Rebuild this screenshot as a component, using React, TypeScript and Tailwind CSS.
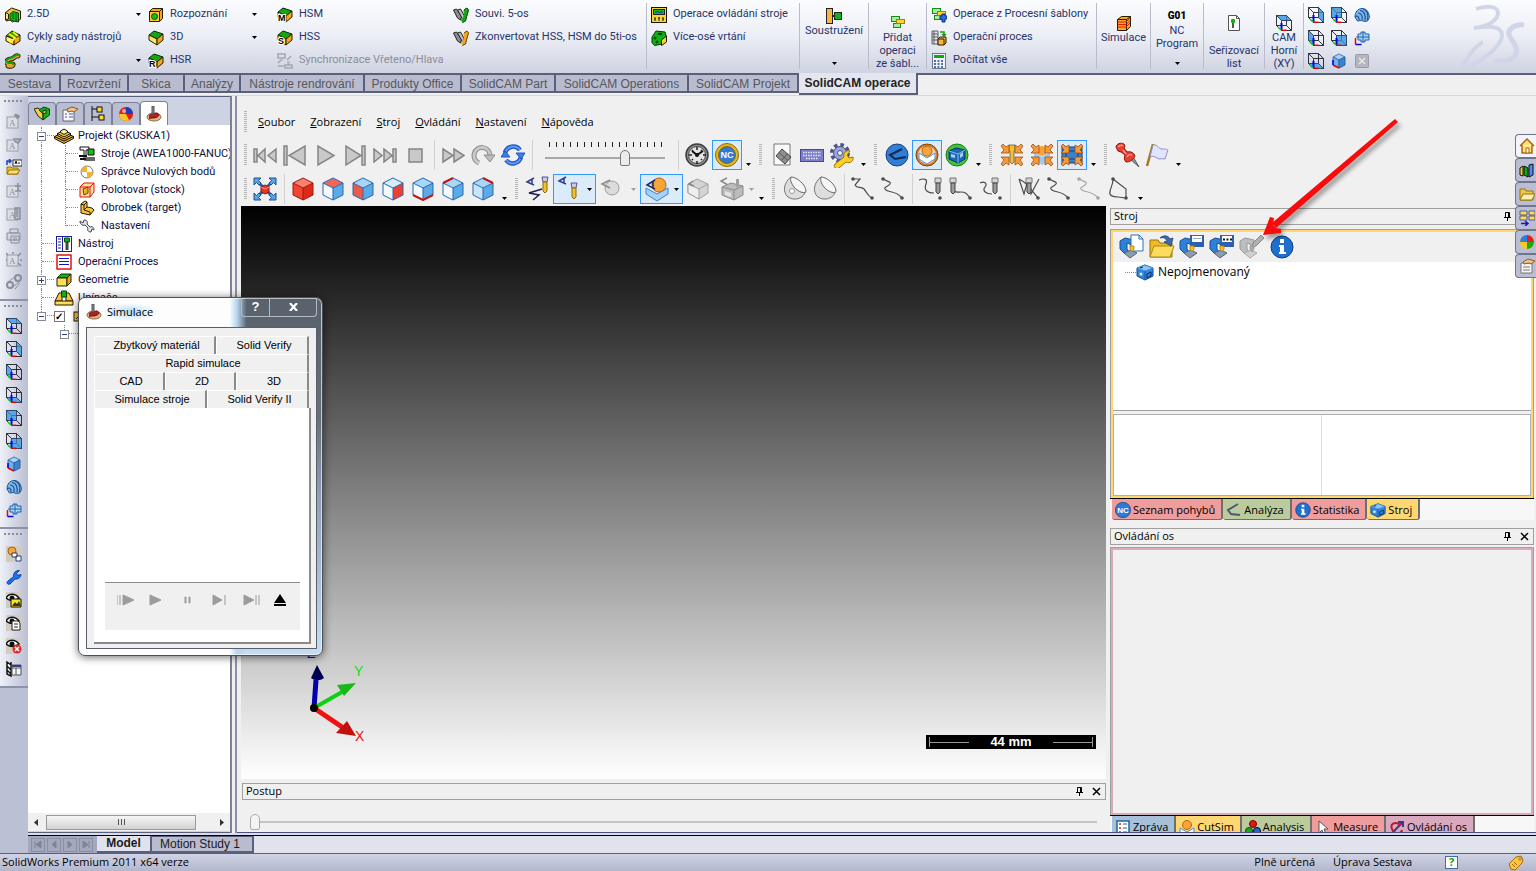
import { useState, type ReactNode } from "react";

type IconProps = { size?: number; box?: number; children: ReactNode };

const Svg = ({ size = 16, box = 16, children }: IconProps) => (
  <svg
    xmlns="http://www.w3.org/2000/svg"
    className="shrink-0"
    width={size}
    height={size}
    viewBox={`0 0 ${box} ${box}`}
    fill="none"
  >
    {children}
  </svg>
);

/* ---------- shared drawings ---------- */

const FACES = {
  top: "0.5,0.5 10.5,0.5 15.5,5.5 5.5,5.5",
  bottom: "0.5,10.5 10.5,10.5 15.5,15.5 5.5,15.5",
  left: "0.5,0.5 5.5,5.5 5.5,15.5 0.5,10.5",
  right: "10.5,0.5 15.5,5.5 15.5,15.5 10.5,10.5",
  back: "0.5,0.5 10.5,0.5 10.5,10.5 0.5,10.5",
  front: "5.5,5.5 15.5,5.5 15.5,15.5 5.5,15.5",
};

const WireCube = ({ face }: { face: keyof typeof FACES }) => (
  <Svg>
    <polygon points={FACES[face]} fill="#5aa7e6" stroke="#1c62ad" />
    <path
      d="M.5.5h10v10H.5zM5.500 5.500h10v10h-10zM.5.5l5 5M10.500.5l5 5M10.500 10.500l5 5M.5 10.500l5 5"
      stroke="#1d1d28"
      strokeWidth=".9"
    />
    <polygon points={FACES[face]} fill="#5aa7e6" fillOpacity=".6" />
    <path d="M5.500 8v7" stroke="#0000f0" strokeWidth="2" />
    <path d="M2 12l3 3" stroke="#00d000" strokeWidth="1.500" />
    <path d="M5.500 15.300h5" stroke="#f00000" strokeWidth="1.500" />
  </Svg>
);

const IsoSolid = () => (
  <Svg>
    <polygon points="2,4 8,1 14,4 8,7" fill="#a9d3f5" stroke="#3f78b5" />
    <polygon points="2,4 8,7 8,15 2,12" fill="#6fb1e8" stroke="#3f78b5" />
    <polygon points="14,4 8,7 8,15 14,12" fill="#3a83cf" stroke="#2a62a5" />
    <path d="M2 12l6 3" stroke="#f00000" strokeWidth="1.500" />
    <path d="M2 7v5" stroke="#0000f0" strokeWidth="1.500" />
  </Svg>
);

const Spiral = () => (
  <Svg>
    <path
      d="M1 10C1 5 4 1.500 8 1.500c5 0 7 4 7.500 9l-2 3.500-3 .5-3-1-4 .5z"
      fill="#7db8ea"
      stroke="#1c5296"
    />
    <path
      d="M4 6c3 0 5 3 4 7M6 3.500c4 0 6 5 5 10M9 2c4 1 6 6 4.500 11M1.500 10c1-2 4-1 3.500 3"
      stroke="#1c5296"
      strokeWidth="1.200"
    />
  </Svg>
);

const CrossBlock = () => (
  <Svg>
    <path d="M4 4h3V2h4v2h4v6h-4v2H7v-2H4z" fill="#a8d2f5" stroke="#1c62ad" />
    <path d="M2 7h13M9 2v10" stroke="#1c62ad" />
    <path d="M1.500 8v6.500" stroke="#f00000" strokeWidth="1.500" />
    <path d="M1.500 14.500h6" stroke="#0000f0" strokeWidth="1.500" />
  </Svg>
);

const Block = ({ top = "#12a812", side = "#f4a51c", letter = "" }) => (
  <Svg>
    <polygon points="1,5 6,1 15,4 9,9" fill={top} stroke="#0a2d0a" />
    <polygon points="1,5 9,9 9,15 1,10" fill="#fbe76a" stroke="#2b1c00" />
    <polygon points="15,4 9,9 9,15 15,10" fill={side} stroke="#2b1c00" />
    {letter && (
      <text
        x="1"
        y="14"
        fontSize="9"
        fontWeight="700"
        fontFamily="Liberation Sans"
        fill="#000"
        stroke="#fff"
        strokeWidth="2"
        paintOrder="stroke"
      >
        {letter}
      </text>
    )}
  </Svg>
);

const Pocket = () => (
  <Svg>
    <path d="M.5 5.500l6-4.500 9 3v8l-3 3-3-1-2 1-2.500-2-3.500 1z" fill="#f4c430" stroke="#2b1c00" />
    <path d="M5 7l3-2.500 5.500 1.500v9l-2-1.500-2 1L5 12.500z" fill="#12b012" stroke="#0a4a0a" />
    <path d="M8 6v6M11 6v7" stroke="#0a6a0a" />
    <path d="M.5 5.500V13l3-1V7z" fill="#fbe76a" stroke="#2b1c00" />
  </Svg>
);

const ToolSet = () => (
  <Svg>
    <polygon points="1,6 7,1 15,5 9,9" fill="#16b016" stroke="#2b1c00" />
    <polygon points="1,6 9,9 9,15 1,11" fill="#fff17a" stroke="#2b1c00" />
    <polygon points="15,5 9,9 9,15 15,11" fill="#f4a51c" stroke="#2b1c00" />
    <path d="M4 4l6 4-5 5M8 2l5 4" stroke="#ffee00" strokeWidth="2" />
  </Svg>
);

const Snake = () => (
  <Svg>
    <path
      d="M13 3c-3-1-4 3-7 3S1 8 2 10s7 0 6 2-5 1-5 1"
      stroke="#2b1c00"
      strokeWidth="5"
      strokeLinecap="round"
    />
    <path
      d="M13 3c-3-1-4 3-7 3S1 8 2 10s7 0 6 2-5 1-5 1"
      stroke="#e8a52a"
      strokeWidth="3"
      strokeLinecap="round"
    />
    <path
      d="M13 2c-3-1-4 3-7 3S1 7 2 9s7 0 6 2"
      stroke="#16a016"
      strokeWidth="2"
      strokeLinecap="round"
    />
  </Svg>
);

const Recognition = () => (
  <Svg>
    <polygon points="1.5,4.5 4.5,1.5 14.5,1.5 14.5,11.5 11.5,14.5 1.5,14.5" fill="#f4a51c" stroke="#2b1c00" />
    <path d="M1.500 4.500h10v10M11.500 4.500l3-3" stroke="#2b1c00" />
    <rect x="2" y="5" width="9" height="9" fill="#fbc63a" />
    <circle cx="6.500" cy="9.500" r="3" fill="#12c012" stroke="#064d06" />
  </Svg>
);

const SyncIcon = () => (
  <Svg>
    <path d="M1 1h7v4H1zM8 12h7v3H8zM4.500 5v3M11.500 8v4M1 10l3-3M10 7l4-4M1 13h6" stroke="#a5a7ae" strokeWidth="1.500" />
    <circle cx="4.500" cy="6.500" r="1.500" fill="#b9bbc2" />
    <circle cx="11.500" cy="9.500" r="1.500" fill="#b9bbc2" />
  </Svg>
);

const FiveAxis = ({ tip }: { tip: string }) => (
  <Svg>
    <path d="M.5 3l3-1 5 7-1 4-3-2z" fill="#8d8f92" stroke="#222" />
    <path d="M4.500 3l3-1 4 7-2 3z" fill="#b8babd" stroke="#222" />
    <path d="M11 3l3-2 1.500 2-2 7-1 4-3 1.500-1-3 3-3z" fill={tip} stroke={tip} />
    <path d="M11 3l3-2 1.500 2-2 7-1 4-3 1.500" stroke="#222" strokeWidth=".7" />
  </Svg>
);

const MachineControl = () => (
  <Svg>
    <rect x=".5" y=".5" width="15" height="15" fill="#f8d53c" stroke="#1c1400" />
    <rect x="2.500" y="2.500" width="11" height="5" fill="#12c012" stroke="#222" />
    <path d="M4 5h2l1-1 1 2 1-1h3" stroke="#0020c0" />
    <path d="M4 10v4M8 10v4M12 10v4M3 12h2M7 11h2M11 12h2" stroke="#222" />
  </Svg>
);

const MultiDrill = () => (
  <Svg>
    <path d="M1 7l4-6 9 1 1.500 5-4 7-8 1.500-2.500-3z" fill="#12b012" stroke="#06360a" />
    <path d="M15.500 6v6l-5 3.500V10z" fill="#f4d42a" stroke="#2b1c00" />
    <circle cx="4" cy="8" r="1.500" fill="#064d06" />
    <circle cx="6" cy="12" r="1.500" fill="#064d06" />
    <ellipse cx="9" cy="4" rx="2.500" ry="1.200" fill="#064d06" />
  </Svg>
);

const Turning = () => (
  <Svg>
    <rect x=".5" y=".5" width="6" height="15" fill="#f6b73c" stroke="#222" />
    <path d="M6.500 8h3" stroke="#222" strokeWidth="2" />
    <rect x="8.500" y="4.500" width="7" height="7" fill="#12b012" stroke="#222" />
  </Svg>
);

const Template = ({ plus = false }) => (
  <Svg>
    <rect x="1.500" y="1.500" width="8" height="5" fill="#a6eda0" stroke="#12901a" />
    <rect x="3.500" y="8.500" width="7" height="4" fill="#a6eda0" stroke="#12901a" />
    <rect x="6.500" y="4.500" width="8" height="4" fill="#fcd535" stroke="#b07a00" />
    {plus && (
      <path d="M9 9h2V7h3v2h2v3h-2v3h-3v-3H9z" fill="#2c6fe0" stroke="#0a2f80" />
    )}
  </Svg>
);

const ProcessIcon = () => (
  <Svg>
    <path d="M1 1h6v13H1zM1 4h6M1 7h6M1 10h6M3 1v13" fill="#e4e6ea" stroke="#5c5f66" />
    <path d="M9 2h4v3M11 4l2 2 2-2" stroke="#16a016" strokeWidth="1.500" />
    <path d="M7 9l2-2h6v6l-2 2H7z" fill="#f6b73c" stroke="#2b1c00" />
    <path d="M7 9h6v6" stroke="#2b1c00" />
  </Svg>
);

const Calculator = () => (
  <Svg>
    <rect x="1.500" y=".5" width="13" height="15" fill="#eef2fb" stroke="#6b7796" />
    <rect x="3" y="2" width="10" height="3" fill="#12a812" />
    <path d="M3 8h10M3 11h10M3 14h10" stroke="#27447f" strokeWidth="1.500" strokeDasharray="2 1.500" />
  </Svg>
);

const SimStack = () => (
  <Svg>
    <path d="M1.500 4.500l4-3h9v10l-4 4h-9z" fill="#f9a62b" stroke="#2b1c00" />
    <path d="M1.500 4.500h9v11M10.500 4.500l4-3" stroke="#2b1c00" />
    <path d="M2 7h8l4-4M2 9.500h8l4-4M2 12h8l4-4" stroke="#e02000" />
  </Svg>
);

const SetupSheet = () => (
  <Svg>
    <path d="M2.500.5h8l3 3v12h-11z" fill="#fdfdfd" stroke="#555" />
    <path d="M10.500.5v3h3" stroke="#555" />
    <rect x="5" y="4" width="4" height="4" rx="1" fill="#12b012" />
    <path d="M7 8v5" stroke="#555" strokeWidth="2" />
  </Svg>
);

const Disabled = () => (
  <Svg>
    <rect x="1.500" y="1.500" width="13" height="13" rx="1" fill="#b4b6bd" stroke="#9a9ca4" />
    <path d="M5 5l6 6M11 5l-6 6" stroke="#e7e8ec" strokeWidth="1.500" />
  </Svg>
);

/* Iso cube of the view toolbar, 24px */
const ViewCube = ({ top = "#d6ecfb", left = "#a9d6f7", right = "#5cabe9", edge = "" }) => (
  <Svg size={24} box={24}>
    <polygon points="2,6 12,1 22,6 12,11" fill={top} />
    <polygon points="2,6 12,11 12,23 2,18" fill={left} />
    <polygon points="22,6 12,11 12,23 22,18" fill={right} />
    <path
      d="M2 6l10-5 10 5v12l-10 5-10-5zM2 6l10 5 10-5M12 11v12"
      stroke={left === "#f2452f" && right === "#dd2a18" ? "#a01810" : "#2468b0"}
    />
    {edge && <path d={edge} stroke="#c01818" strokeWidth="2" />}
  </Svg>
);

const P = {
  first: "M1 6h3v13H1zM12 6v13L5 12.500zM23 6v13l-8-6.500z",
  prev: "M1 3h3v19H1zM22 3v19L6 12.500z",
  play: "M5 3v19l16-9.500z",
  next: "M3 3v19l15-9.500zM19 3h3v19h-3z",
  last: "M1 6v13l8-6.500zM11 6v13l8-6.500zM20 6h3v13h-3z",
  stop: "M6 6h13v13H6z",
  ff: "M2 6v13l10-6.500zM13 6v13l10-6.500z",
};

const Media = ({ d }: { d: string }) => (
  <Svg size={25} box={25}>
    <path d={d} fill="#c9c9c9" stroke="#858585" strokeWidth="1.500" />
  </Svg>
);

const LoopGray = () => (
  <Svg size={24} box={24}>
    <path d="M8 20a8 8 0 1 1 11-8" stroke="#8d8d8d" strokeWidth="5" />
    <path d="M8 20a8 8 0 1 1 11-8" stroke="#c9c9c9" strokeWidth="3" />
    <path d="M13 12h11l-5 7z" fill="#bdbdbd" stroke="#8d8d8d" />
  </Svg>
);

const LoopBlue = () => (
  <Svg size={24} box={24}>
    <path d="M4 10a8.500 8.500 0 0 1 15-3M20 14a8.500 8.500 0 0 1-15 3" stroke="#1c55c8" strokeWidth="4.500" />
    <path d="M4 10a8.500 8.500 0 0 1 15-3M20 14a8.500 8.500 0 0 1-15 3" stroke="#5c9af4" strokeWidth="2" />
    <path d="M0 14h9l-5-6zM24 10h-9l5 6z" fill="#3f7eea" stroke="#1c55c8" />
  </Svg>
);

const Clock = () => (
  <Svg size={24} box={24}>
    <circle cx="12" cy="12" r="11" fill="#8f8f8f" stroke="#3e3e3e" strokeWidth="1.500" />
    <circle cx="12" cy="12" r="8.500" fill="#e4e4e4" stroke="#4a4a4a" />
    <path d="M12 4v3M12 18v3M4 12h3M18 12h3M7 7l1 1M17 7l-1 1M7 17l1-1M17 17l-1-1" stroke="#222" strokeWidth="1.500" />
    <path d="M7 8l5 4 6-4" stroke="#111" strokeWidth="2" />
    <circle cx="12" cy="12" r="2" fill="#111" />
  </Svg>
);

const NcBadge = ({ size = 24, gold = true }) => (
  <Svg size={size} box={24}>
    <circle cx="12" cy="12" r="11.500" fill={gold ? "#e9b91c" : "#2c7bd8"} stroke={gold ? "#8a6a08" : "#123f80"} />
    <circle cx="12" cy="12" r="8.500" fill="#2c7bd8" stroke={gold ? "#8a6a08" : "#2c7bd8"} />
    <text
      x="12"
      y={gold ? 15 : 16}
      fontSize={gold ? 9 : 12}
      fontWeight="700"
      fontFamily="Liberation Sans"
      textAnchor="middle"
      fill="#fff"
    >
      NC
    </text>
  </Svg>
);

const PlaneSheet = () => (
  <Svg size={24} box={24}>
    <path d="M4 1h16v21H4z" fill="#fafafa" stroke="#777" />
    <path d="M6 13l6-7 9 8-6 7z" fill="#8e8e8e" stroke="#444" />
    <path d="M9 9.500l9 8M12 17l6-7" stroke="#5b5b5b" />
  </Svg>
);

const Keyboard = () => (
  <Svg size={24} box={24}>
    <rect x=".5" y="6.500" width="23" height="12" fill="#7d7fc6" stroke="#474a92" />
    <path d="M3 9.500h18M3 12.500h18M6 15.500h12" stroke="#e4e4fb" strokeWidth="1.500" strokeDasharray="1.500 1" />
  </Svg>
);

const GearWrench = () => (
  <Svg size={26} box={26}>
    <circle cx="11" cy="11" r="8" stroke="#4a5488" strokeWidth="4" strokeDasharray="3.400 2.900" />
    <circle cx="11" cy="11" r="6.500" fill="#9aa5d6" stroke="#4a5488" />
    <circle cx="11" cy="11" r="2.500" fill="#f0f0f0" stroke="#4a5488" />
    <path
      d="M6 22l9-7c-1-5 3-7 6-6l-3 4 2 3 4-1c1 4-3 7-7 5l-7 6c-3 2-6-1-4-4z"
      fill="#fbcf2a"
      stroke="#9c7400"
    />
  </Svg>
);

const BlueHook = () => (
  <Svg size={24} box={24}>
    <circle cx="12" cy="12" r="11" fill="#2f7fd6" stroke="#17427e" />
    <path d="M17 6L5 12l5 4 11-2" stroke="#12284e" strokeWidth="2" />
  </Svg>
);

const CutBadge = () => (
  <Svg size={24} box={24}>
    <circle cx="12" cy="12" r="11" fill="#dd7d1c" stroke="#7c430a" />
    <circle cx="12" cy="12" r="9" fill="#e9dccb" />
    <path d="M4 10l8 5 8-5v6l-8 5-8-5z" fill="#fff" stroke="#4a90d8" />
    <circle cx="12" cy="8" r="5" fill="#f7a53a" stroke="#b8660c" />
  </Svg>
);

const GreenBadge = () => (
  <Svg size={24} box={24}>
    <circle cx="12" cy="12" r="11" fill="#3cc83a" stroke="#1b7a1b" />
    <path d="M4 8l7-3 9 2v9l-7 4-9-4z" fill="#1f66b8" stroke="#0c2f60" />
    <path d="M4 8l9 3 7-4M13 11v9" stroke="#7cbcf2" />
    <path d="M6 11l4 1v3l-4-1zM15 11l3-2v4l-3 2z" fill="#9fd0f7" />
  </Svg>
);

const FocusIn = ({ core }: { core: "tool" | "part" | "machine" }) => (
  <Svg size={24} box={24}>
    {core === "machine" && <path d="M2 4h20v16H2zM6 8h12v8H6z" fill="#3584d2" stroke="#123f78" />}
    {core === "part" && (
      <g>
        <path d="M4 9l8 5 8-5v8l-8 5-8-5z" fill="#9acbf5" />
        <circle cx="12" cy="8" r="5" fill="#f7a53a" />
      </g>
    )}
    {core === "tool" && (
      <path d="M9 2h6v6h-1v11l-2 2-2-2V8H9z" fill="#f0c030" stroke="#777" />
    )}
    <path
      d="M1 3l2-2 3 3 3-2v8H1l3-3zM23 3l-2-2-3 3-3-2v8h8l-3-3zM1 21l2 2 3-3 3 2v-8H1l3 3zM23 21l-2 2-3-3-3 2v-8h8l-3 3z"
      fill="#f79a3c"
      stroke="#a04f0a"
      strokeWidth=".8"
    />
  </Svg>
);

const Pin = () => (
  <Svg size={26} box={26}>
    <path d="M15 16l10 9-7-12z" fill="#999" stroke="#555" />
    <path
      d="M2 5c0-3 5-5 8-3l1 2-1 2 3 4c4-1 7 1 8 4-2 4-5 6-9 6-2-2-2-5-1-7L7 10l-3-1z"
      fill="#e8402e"
      stroke="#8c140c"
    />
    <path d="M4 5c2-2 4-2 5-1M9 8l3 4M13 15c1-2 3-3 5-2" stroke="#ff9a8a" strokeWidth="1.500" />
  </Svg>
);

const Flag = () => (
  <Svg size={26} box={26}>
    <path d="M9 2L3 24" stroke="#a87a1c" strokeWidth="2.500" />
    <path d="M9 3c5-1 5 4 9 4s4 0 6 1l-3 9c-4-1-5 1-8-1s-4-2-7-1z" fill="#e2e3fc" stroke="#8f91c8" />
  </Svg>
);

const FitView = () => (
  <Svg size={24} box={24}>
    <path d="M6 6l12 12M18 6L6 18" stroke="#1f5fb4" strokeWidth="3" />
    <path
      d="M1 1h7L5.500 3.500 8 6 6 8 3.500 5.500 1 8zM23 1h-7l2.500 2.500L16 6l2 2 2.500-2.500L23 8zM1 23h7l-2.500-2.500L8 18l-2-2-2.500 2.500L1 16zM23 23h-7l2.500-2.500L16 18l2-2 2.500 2.500L23 16z"
      fill="#56a4ea"
      stroke="#1c4f94"
    />
    <path d="M8 10l4-2 4 2v5l-4 2-4-2z" fill="#e63522" stroke="#8c140c" />
    <path d="M8 10l4 2 4-2" stroke="#ff9a8a" />
  </Svg>
);

const EyeTool = ({ path = false }) => (
  <Svg size={26} box={26}>
    <path d="M9 2L2 6l7 3M7 3v5" stroke="#2c3f8c" strokeWidth="1.500" />
    <path d="M17 1h6l-1 5h-4z" fill="#c9cbe8" stroke="#54568c" />
    <path d="M18 6h4v9l-2 2-2-2z" fill="#f2c22c" stroke="#8a6a08" />
    {path && <path d="M17 13L4 17l10 2-6 5" stroke="#1c1c54" strokeWidth="1.500" />}
  </Svg>
);

const EyeToolLow = () => (
  <Svg size={26} box={26}>
    <path d="M9 1L2 5l7 3M7 2v5" stroke="#2c3f8c" strokeWidth="1.500" />
    <path d="M14 7h6l-1 5h-4z" fill="#c9cbe8" stroke="#54568c" />
    <path d="M15 12h4v9l-2 2-2-2z" fill="#f2c22c" stroke="#8a6a08" />
  </Svg>
);

const EyeGray = () => (
  <Svg size={24} box={24}>
    <circle cx="13" cy="11" r="7" fill="#dcdcdc" stroke="#9c9c9c" />
    <path d="M11 3L3 7l8 4" stroke="#8a8a8a" strokeWidth="1.500" />
  </Svg>
);

const EyePart = () => (
  <Svg size={26} box={26}>
    <path d="M2 12l11 6 11-6v6l-11 7-11-7z" fill="#a6d2f7" stroke="#3f84cc" />
    <circle cx="15" cy="9" r="7" fill="#f7a53a" stroke="#b8660c" />
    <path d="M11 4L3 9l8 4M9 5v7" stroke="#1c2c64" strokeWidth="1.500" />
  </Svg>
);

const BoxGray = () => (
  <Svg size={24} box={24}>
    <path d="M2 7l9-5 11 5v9l-9 6-11-6z" fill="#d4d4d4" stroke="#a0a0a0" />
    <path d="M2 7l11 5v10L2 16z" fill="#efefef" stroke="#a0a0a0" />
    <path d="M13 12l9-5" stroke="#a0a0a0" />
    <path d="M7 4L3 7l5 2" stroke="#888" strokeWidth="1.500" />
  </Svg>
);

const MachineGray = () => (
  <Svg size={26} box={26}>
    <path d="M8 2L2 5l7 4" stroke="#8a8a8a" strokeWidth="1.500" />
    <path d="M3 11l9-4 12 3v9l-9 5-12-5z" fill="#bcbcbc" stroke="#8a8a8a" />
    <path d="M3 11l12 3 9-4M15 14v10" stroke="#8a8a8a" />
    <path d="M6 15l6 2v4l-6-2z" fill="#e4e4e4" />
    <path d="M17 3h3v7l-2 2-1-2z" fill="#a0a0a0" />
  </Svg>
);

const Bulb = ({ dot = false }) => (
  <Svg size={26} box={26}>
    <path d="M9 1c-7 5-9 15-3 20 6 4 14 2 17-4 1-2 0-5-3-6S12 7 9 1z" fill="#dedede" stroke="#777" />
    <path d="M9 1c6 0 15 8 15 14-1 4-9 0-12-4S8 4 9 1z" fill="#f6f6f6" stroke="#666" />
    {dot && <circle cx="10" cy="15" r="2.500" fill="#fff" stroke="#999" />}
  </Svg>
);

const PATHS = {
  a: "M2 3h8l-5 6c2 4 6 1 9 4s3 7 8 9",
  b: "M3 2c2 4 9 3 7 6s-8 3-4 6 9 0 16 8",
  c: "M1 4c5-2 9-1 7 4s0 9 8 9",
  d: "M4 10c-1 7 4 6 9 6s6 2 9 6",
  e: "M2 7c4-2 8 0 5 4s1 7 7 7",
  f: "M3 3l5 15 4-14 3 14 8-15M3 3c8 4 10 8 19 19",
  g: "M7 3l13 10v9l-8-1c-6 0-9-2-8-5 0-4 3-6 3-13z",
};

const PathIcon = ({ d, tool = 0, light = false }: { d: string; tool?: number; light?: boolean }) => (
  <Svg size={26} box={26}>
    <path d={d} stroke={light ? "#a5a5a5" : "#4c4c4c"} strokeWidth="1.200" />
    {tool > 0 && (
      <g transform={`translate(${tool} 0)`}>
        <path d="M0 2h6v5H0z" fill="#d4d4d4" stroke="#777" />
        <path d="M1 7h4v9l-2 2-2-2z" fill="#9c9c9c" stroke="#444" />
      </g>
    )}
    <circle cx={d === PATHS.g ? 20 : 22} cy="22" r="1.800" fill={light ? "#a5a5a5" : "#4c4c4c"} />
    {tool === 0 && (
      <circle cx={d === PATHS.g ? 7 : 3} cy="3" r="1.800" fill={light ? "#a5a5a5" : "#4c4c4c"} />
    )}
  </Svg>
);

const MachineBlue = ({ extra, gray = false }: { extra: ReactNode; gray?: boolean }) => (
  <Svg size={26} box={26}>
    <path
      d="M1 7l5-3 9 2v5h-4v-1l-3-1v6l2 3-4 2-5-5z"
      fill={gray ? "#bdbdbd" : "#2f80d8"}
      stroke={gray ? "#999" : "#1b508e"}
    />
    <path d="M5 19l7-3 6 3-7 5z" fill={gray ? "#cfcfcf" : "#8b9bb0"} stroke={gray ? "#aaa" : "#566579"} />
    {extra}
    <path d="M11 12h4v3l-2 3-2-3z" fill={gray ? "#aaa" : "#f5c02e"} stroke={gray ? "#999" : "#b08010"} strokeWidth=".8" />
  </Svg>
);

const Folder = ({ size = 26 }) => (
  <Svg size={size} box={26}>
    <path d="M1 6h8l2 3h12v14H1z" fill="#eeb92a" stroke="#9c7400" />
    <path d="M5 12h20l-4 11H1z" fill="#fbdc5c" stroke="#b08a10" />
    <path d="M11 4c3-3 8-3 10 1l3-1-2 8-7-4 3-1c-1-3-4-4-7-3z" fill="#3f6ca8" stroke="#1f3f70" strokeWidth=".8" />
  </Svg>
);

const Info = ({ size = 24 }) => (
  <Svg size={size} box={24}>
    <circle cx="12" cy="12" r="11" fill="#1f6fcf" stroke="#123f80" />
    <path d="M10 4h4v4h-4zM9 10h5v7h2v2H9v-2h1v-5H9z" fill="#fff" />
  </Svg>
);

const MachineCube = ({ size = 18 }) => (
  <Svg size={size} box={18}>
    <path d="M1 5l8-3 8 3v8l-8 4-8-4z" fill="#2f86de" stroke="#154a8a" />
    <path d="M1 5l8 3 8-3-8-3z" fill="#8cc6f5" stroke="#3f8fdc" />
    <path d="M9 8v9" stroke="#1b5ca6" />
    <path d="M4 5l3-1M11 11l4-2v4l-4 2z" stroke="#0c2c5a" />
    <circle cx="5" cy="11" r="1.500" fill="#d8ecff" />
  </Svg>
);

const ToolDisc = () => (
  <Svg>
    <ellipse cx="8" cy="11" rx="7" ry="4" fill="#d9b98a" stroke="#8c6a3c" />
    <path d="M3 10c2-3 5-1 7-3 3 0 4 3 1 4-3 2-6 0-8 2" fill="#c01c1c" stroke="#7c0a0a" />
    <path d="M6 0h2v7l-1 2-1-2z" fill="#8e9296" stroke="#4c5056" />
  </Svg>
);

/* ---------- small pieces ---------- */

const Arrow = ({ gray = false }) => (
  <svg className={`shrink-0 ${gray ? "text-gray-400" : "text-black"}`} width="5" height="3" viewBox="0 0 5 3">
    <path d="M0 0h5L2.500 3z" fill="currentColor" />
  </svg>
);

const Grip = ({ first = false }) => (
  <span className={`flex h-[22px] shrink-0 justify-center ${first ? "w-[9px]" : "w-[13px]"}`}>
    <span className="w-[3px] bg-[repeating-linear-gradient(to_bottom,#b5b5b5_0_1px,transparent_1px_2px)]" />
  </span>
);

const Sep = () => (
  <span className="flex w-2 shrink-0 justify-center">
    <span className="h-[30px] w-px bg-[#d0d0d0]" />
  </span>
);

const More = () => (
  <button aria-label="Další" className="flex h-[22px] w-3 shrink-0 items-end justify-center">
    <Arrow />
  </button>
);

type ToolProps = {
  label: string;
  icon: ReactNode;
  active?: boolean;
  arrow?: boolean;
};

const Tool = ({ label, icon, active, arrow }: ToolProps) => (
  <button
    aria-label={label}
    className={`flex h-[30px] shrink-0 items-center justify-center border ${arrow ? "w-[43px] gap-1" : "w-[30px]"} ${
      active ? "border-[#3399ff] bg-[#dcebfa]" : "border-transparent"
    }`}
  >
    {icon}
    {arrow && <Arrow />}
  </button>
);

/* ---------- ribbon ---------- */

type RibbonItem = { label: string; icon: ReactNode; arrow?: boolean; off?: boolean };

const RibbonColumn = ({ items, className }: { items: RibbonItem[]; className: string }) => (
  <div className={`shrink-0 ${className}`}>
    {items.map((item) => (
      <button
        key={item.label}
        disabled={item.off}
        className="flex h-[23px] w-full items-center gap-[6px] whitespace-nowrap text-left text-[#27336b] disabled:text-[#8b8d96]"
      >
        {item.icon}
        {item.label}
        {item.arrow && (
          <span className="ml-auto">
            <Arrow />
          </span>
        )}
      </button>
    ))}
  </div>
);

const Divider = () => <span className="h-[66px] w-px shrink-0 bg-[#b9bdcb]" />;

type BigProps = {
  lines: string[];
  icon: ReactNode;
  className: string;
  high?: boolean;
  low?: boolean;
  arrow?: boolean;
};

const BigButton = ({ lines, icon, className, high, low, arrow }: BigProps) => (
  <button
    className={`flex h-[68px] shrink-0 flex-col items-center whitespace-nowrap leading-[13px] text-[#27336b] ${
      high ? "pt-1" : "pt-[11px]"
    } ${className}`}
  >
    <span className={`flex h-[17px] shrink-0 items-center ${low ? "mb-[13px]" : ""}`}>{icon}</span>
    {lines.map((line) => (
      <span key={line}>{line}</span>
    ))}
    {arrow && (
      <span className="mt-auto pb-[6px]">
        <Arrow />
      </span>
    )}
  </button>
);

const Ribbon = () => (
  <div className="relative flex h-[73px] shrink-0 overflow-hidden bg-linear-to-b from-[#fbfcfe] via-[#eceef5] to-[#cfd3e1] pl-[5px] pt-[3px] font-['Roboto',sans-serif] text-[11px]">
    <RibbonColumn
      className="mr-[7px] w-[136px]"
      items={[
        { label: "2.5D", icon: <Pocket />, arrow: true },
        { label: "Cykly sady nástrojů", icon: <ToolSet /> },
        { label: "iMachining", icon: <Snake />, arrow: true },
      ]}
    />
    <RibbonColumn
      className="mr-5 w-[109px]"
      items={[
        { label: "Rozpoznání", icon: <Recognition />, arrow: true },
        { label: "3D", icon: <Block />, arrow: true },
        { label: "HSR", icon: <Block letter="R" /> },
      ]}
    />
    <RibbonColumn
      className="w-[176px]"
      items={[
        { label: "HSM", icon: <Block letter="M" /> },
        { label: "HSS", icon: <Block letter="S" /> },
        { label: "Synchronizace Vřeteno/Hlava", icon: <SyncIcon />, off: true },
      ]}
    />
    <RibbonColumn
      className="w-[193px]"
      items={[
        { label: "Souvi. 5-os", icon: <FiveAxis tip="#12a812" /> },
        { label: "Zkonvertovat HSS, HSM do 5ti-os", icon: <FiveAxis tip="#f4a51c" /> },
      ]}
    />
    <Divider />
    <RibbonColumn
      className="ml-1 w-[148px]"
      items={[
        { label: "Operace ovládání stroje", icon: <MachineControl /> },
        { label: "Více-osé vrtání", icon: <MultiDrill /> },
      ]}
    />
    <Divider />
    <BigButton high arrow className="w-[68px]" lines={["Soustružení"]} icon={<Turning />} />
    <Divider />
    <BigButton className="w-[57px]" lines={["Přidat", "operaci", "ze šabl..."]} icon={<Template />} />
    <Divider />
    <RibbonColumn
      className="ml-1 w-[165px]"
      items={[
        { label: "Operace z Procesní šablony", icon: <Template plus /> },
        { label: "Operační proces", icon: <ProcessIcon /> },
        { label: "Počítat vše", icon: <Calculator /> },
      ]}
    />
    <Divider />
    <BigButton className="w-[53px]" lines={["Simulace"]} icon={<SimStack />} />
    <Divider />
    <BigButton
      high
      arrow
      className="w-[52px]"
      lines={["NC", "Program"]}
      icon={<span className="text-[10px] font-black text-black">G01</span>}
    />
    <Divider />
    <BigButton low className="w-[60px]" lines={["Seřizovací", "list"]} icon={<SetupSheet />} />
    <Divider />
    <BigButton className="w-[38px]" lines={["CAM", "Horní", "(XY)"]} icon={<WireCube face="top" />} />
    <Divider />
    <div className="grid w-[69px] shrink-0 grid-cols-3 content-start place-items-center">
      {[
        <WireCube face="right" />,
        <WireCube face="back" />,
        <Spiral />,
        <WireCube face="left" />,
        <WireCube face="front" />,
        <CrossBlock />,
        <WireCube face="bottom" />,
        <IsoSolid />,
        <Disabled />,
      ].map((icon, i) => (
        <button key={i} aria-label={`Pohled ${i + 1}`} className="flex h-[23px] items-center">
          {icon}
        </button>
      ))}
    </div>
    <svg className="ml-auto mr-2 shrink-0" width="76" height="70" viewBox="0 0 76 70" fill="none">
      <path
        d="M24 6c10-4 22-3 22 4 0 8-12 14-24 15 12-2 28-3 28 7 0 12-22 28-40 34 4-11 12-22 21-27"
        stroke="#d0d6e8"
        strokeWidth="4"
      />
      <path d="M72 22c-10-1-18 5-14 12 3 6 11 12 4 20-4 4-12 5-19 3" stroke="#d0d6e8" strokeWidth="5" />
    </svg>
  </div>
);

const TABS = [
  { label: "Sestava", width: "w-[61px]" },
  { label: "Rozvržení", width: "w-[68px]" },
  { label: "Skica", width: "w-[56px]" },
  { label: "Analýzy", width: "w-[56px]" },
  { label: "Nástroje rendrování", width: "w-[124px]" },
  { label: "Produkty Office", width: "w-[97px]" },
  { label: "SolidCAM Part", width: "w-[94px]" },
  { label: "SolidCAM Operations", width: "w-[133px]" },
  { label: "SolidCAM Projekt", width: "w-[110px]" },
  { label: "SolidCAM operace", width: "w-[119px]" },
];

const CommandTabs = () => {
  const [active, setActive] = useState("SolidCAM operace");

  return (
    <div className="flex h-[23px] shrink-0 items-start border-b border-[#d8d8d8] bg-[#f0f0f0] font-['Liberation_Sans',sans-serif] text-[12px] shadow-[inset_0_2px_0_#5b607a]">
      {TABS.map(({ label, width }) => (
        <button
          key={label}
          onClick={() => setActive(label)}
          className={`shrink-0 whitespace-nowrap border-r-2 border-[#5b607a] ${width} ${
            active === label
              ? "h-[22px] border-b-2 bg-[#e4e6ef] font-bold text-[#222]"
              : "h-5 border-y-2 bg-[#b9bccf] text-[#55565e]"
          }`}
        >
          {label}
        </button>
      ))}
    </div>
  );
};

/* ---------- left toolbar ---------- */

const FadedNote = ({ d }: { d: string }) => (
  <Svg>
    <rect x="1" y="4" width="11" height="11" fill="#dcdee6" stroke="#9a9da8" />
    <text x="3" y="13" fontSize="9" fontFamily="Liberation Serif" fill="#8b8e99">
      A
    </text>
    <path d={d} stroke="#8b8e99" strokeWidth="1.500" />
  </Svg>
);

const Eye = ({ children }: { children: ReactNode }) => (
  <Svg>
    <rect width="16" height="16" fill="#d2ccc0" />
    <path d="M0 6c3-5 9-5 13 0-4 3-9 3-13 0z" fill="#fff" stroke="#111" strokeWidth="1.500" />
    <circle cx="6" cy="6" r="2.500" fill="#111" />
    {children}
  </Svg>
);

const SIDE_GROUPS: ReactNode[][] = [
  [
    <FadedNote d="M11 1v5M8 3h6M9 1l4 4" />,
    <FadedNote d="M7 3h8l-3 4-4-2" />,
    <Svg>
      <path d="M1 6V2h4M3 0l2 2-2 2" stroke="#1c3fc0" strokeWidth="1.500" />
      <rect x="7" y="1" width="9" height="6" fill="#fff" stroke="#333" />
      <path d="M9 5l1-3 1 3M13 3v2" stroke="#111" />
      <path d="M1 8h4l1 1h6v6H1z" fill="#f0b82a" stroke="#9c7400" />
      <path d="M3 11h11l-3 4H1z" fill="#fbe07a" stroke="#9c7400" />
    </Svg>,
    <FadedNote d="M12 1v8M9 4h6M9 9h6" />,
    <FadedNote d="M9 3h5v11H9zM11 4v8" />,
    <Svg>
      <path d="M4 1h8v4H4zM1 5h13v7H1zM5 8h8v7H5zM7 10h4M7 12h4" fill="#d4d6de" stroke="#8b8e99" />
    </Svg>,
    <FadedNote d="M0 2l2 2M15 2l-3 3M15 15l-3-3M0 9h1M7 1v2M14 9h2" />,
    <Svg>
      <circle cx="4" cy="11" r="3" stroke="#8b8e99" strokeWidth="2" />
      <circle cx="12" cy="4" r="3" stroke="#8b8e99" strokeWidth="2" />
      <path d="M2 8l8-6M7 13l8-7M9 15l5-6" stroke="#8b8e99" />
    </Svg>,
  ],
  [
    <WireCube face="top" />,
    <WireCube face="right" />,
    <WireCube face="left" />,
    <WireCube face="bottom" />,
    <WireCube face="back" />,
    <WireCube face="front" />,
    <IsoSolid />,
    <Spiral />,
    <CrossBlock />,
  ],
  [
    <Svg>
      <rect width="16" height="16" fill="#d2ccc0" />
      <circle cx="6" cy="5" r="4" fill="#f3a83c" stroke="#a85f10" />
      <path d="M6 7h5v4H6zM10 10h5v5h-5z" fill="#fff" stroke="#2a3a80" />
    </Svg>,
    <Svg>
      <path d="M1.500 12.500l6-5c0-4 2-6 6-6l-3 3 1 2 3.500-1c0 3-3 5-6 4.500l-5 5c-2 1-4-1-2.500-2.500z" fill="#1f72e8" stroke="#0a3fa0" />
    </Svg>,
    <Eye>
      <path d="M5 7h10v8H5z" fill="#fbe620" stroke="#111" />
      <path d="M6 14l3-4 2 2 2-3 2 5" fill="#333" />
    </Eye>,
    <Eye>
      <path d="M6 6h6l2 2v7H6zM8 9h4M8 12h4" fill="#fff" stroke="#222" />
    </Eye>,
    <Eye>
      <circle cx="11" cy="11" r="4.500" fill="#e02828" />
      <path d="M9 9l4 4M13 9l-4 4" stroke="#fff" strokeWidth="1.500" />
    </Eye>,
    <Svg>
      <path d="M1 1l4 3v11l-4-2zM5 1v4M1 5l4 4M1 9l4 4" fill="#fff" stroke="#111" strokeWidth="1.500" />
      <path d="M6 4h9v10H6zM6 7h9M10 7v7" fill="#f4f4f4" stroke="#555" />
      <path d="M6 4h9v2H6z" fill="#3c3c8c" />
    </Svg>,
  ],
];

const SideToolbar = () => (
  <div className="w-7 shrink-0 bg-[#bcc0d4]">
    {SIDE_GROUPS.map((group, g) => (
      <div
        key={g}
        className="border-b-2 border-[#8e92a8] bg-linear-to-r from-[#eff1f8] to-[#b9bed2] pb-[6px] pt-1"
      >
        <div className="mx-1 mb-[7px] h-[2px] bg-[repeating-linear-gradient(to_right,#8a8da0_0_2px,transparent_2px_4px)]" />
        {group.map((icon, i) => (
          <button key={i} aria-label={`Příkaz ${g + 1}.${i + 1}`} className="flex h-[23px] w-7 items-center justify-center">
            {icon}
          </button>
        ))}
      </div>
    ))}
  </div>
);

/* ---------- project tree ---------- */

type Node = {
  label: string;
  icon?: ReactNode;
  level: number;
  box?: "+" | "-";
  check?: boolean;
  last?: boolean;
};

const NODES: Node[] = [
  {
    label: "Projekt (SKUSKA1)",
    level: 0,
    box: "-",
    icon: (
      <Svg size={20} box={20}>
        <path d="M.5 10.500L10 6l9.500 4.500v2L10 17.500.5 12.500z" fill="#e8a81c" stroke="#111" />
        <path d="M.5 10.500L10 15l9.500-4.500" stroke="#111" />
        <path d="M3.500 7.500L10 4l6.500 3.500v2L10 13 3.500 9.500z" fill="#f6cf4a" stroke="#111" />
        <path d="M3.500 7.500L10 11l6.500-3.500" stroke="#111" />
        <path d="M6.500 5L10 3l3.500 2v1.500L10 8.500l-3.500-2z" fill="#fff0a0" stroke="#111" />
      </Svg>
    ),
  },
  {
    label: "Stroje (AWEA1000-FANUC)",
    level: 1,
    icon: (
      <Svg>
        <path d="M1 1h9v3H7v10H5V4H1z" fill="#fff" stroke="#111" />
        <path d="M0 10h8M1 13h14" stroke="#111" strokeWidth="2" />
        <path d="M9 3h6v6H9z" fill="#12c012" stroke="#111" />
        <path d="M7 11h9v4H7z" fill="#666" />
      </Svg>
    ),
  },
  {
    label: "Správce Nulových bodů",
    level: 1,
    icon: (
      <Svg>
        <circle cx="8" cy="8" r="6" fill="#fff" stroke="#777" />
        <path d="M8 2v6H2a6 6 0 0 1 6-6zM8 14V8h6a6 6 0 0 1-6 6z" fill="#f3b42c" />
      </Svg>
    ),
  },
  {
    label: "Polotovar (stock)",
    level: 1,
    icon: (
      <Svg>
        <path d="M1 5l4-4h10v9l-4 5H1z" fill="#fbe29a" stroke="#e01010" />
        <path d="M4 7l5-2v6l-4 2z" fill="#f0b030" stroke="#7c3a00" />
        <path d="M1 5h10v10M11 5l4-4" stroke="#e01010" />
      </Svg>
    ),
  },
  {
    label: "Obrobek (target)",
    level: 1,
    icon: (
      <Svg>
        <path d="M2 4l4-3 2 1v5l5 1 2 2-4 5-9-2z" fill="#f6c43a" stroke="#2b1c00" />
        <path d="M2 4l3 1v5l6 2v3M5 10l3-3M5 5l3-3" stroke="#2b1c00" />
      </Svg>
    ),
  },
  {
    label: "Nastavení",
    level: 1,
    last: true,
    icon: (
      <Svg>
        <path
          d="M1 3l3 2 1-3c3 0 4 2 3 4l3 3c3-1 4 1 4 3l-2-1-1 3c-3 0-4-2-3-4L6 7C3 8 1 6 1 3z"
          fill="#dfe3ea"
          stroke="#3c4454"
        />
      </Svg>
    ),
  },
  {
    label: "Nástroj",
    level: 0,
    icon: (
      <Svg>
        <rect x=".5" y=".5" width="15" height="15" fill="#fff" stroke="#1c1c9c" />
        <path d="M2 3h3M2 6h3M2 9h3M2 12h3M6.500 1v14" stroke="#1c1c9c" />
        <path d="M11 6v8" stroke="#444" strokeWidth="3" />
        <path d="M8.500 2h5v4h-5z" fill="#12b012" stroke="#064d06" />
      </Svg>
    ),
  },
  {
    label: "Operační Proces",
    level: 0,
    icon: (
      <Svg>
        <rect x="1" y="1" width="14" height="14" fill="#fff" stroke="#e81010" strokeWidth="1.500" />
        <path d="M3 4.500h10M3 7.500h10M3 10.500h10" stroke="#1414c8" />
      </Svg>
    ),
  },
  {
    label: "Geometrie",
    level: 0,
    box: "+",
    icon: (
      <Svg>
        <path d="M1 6l4-4h10l-4 4z" fill="#12b012" stroke="#0a3a0a" />
        <path d="M1 6h10v8H1z" fill="#fbe05a" stroke="#2b1c00" />
        <path d="M11 6l4-4v8l-4 4z" fill="#e8a81c" stroke="#2b1c00" />
      </Svg>
    ),
  },
  {
    label: "Upínače",
    level: 0,
    icon: (
      <Svg size={20} box={20}>
        <path d="M1 13l4-8h3v8zM19 13l-4-8h-3v8z" fill="#f6c43a" stroke="#2b1c00" />
        <path d="M1 13h18v4H1z" fill="#fbdc5c" stroke="#2b1c00" />
        <path d="M7.500 3h5v6h-5z" fill="#12b012" stroke="#0a3a0a" />
      </Svg>
    ),
  },
  {
    label: "",
    level: 0,
    box: "-",
    check: true,
    last: true,
    icon: (
      <Svg size={13} box={13}>
        <rect x="1" y="2" width="10" height="9" fill="#f6c43a" stroke="#2b1c00" />
        <path d="M3 9l5-5" stroke="#2b1c00" />
      </Svg>
    ),
  },
];

const Expander = ({ sign }: { sign: "+" | "-" }) => (
  <button
    aria-label={sign === "+" ? "Rozbalit" : "Sbalit"}
    className="absolute left-[9px] top-[5px] flex size-[9px] items-center justify-center border border-[#848a96] bg-white"
  >
    <svg width="5" height="5" viewBox="0 0 5 5">
      <path d={sign === "+" ? "M0 2.500h5M2.500 0v5" : "M0 2.500h5"} stroke="#2a3c7c" />
    </svg>
  </button>
);

/* Dotted guide that leads from the parent line to the row's icon */
const Guide = ({ last, across }: { last?: boolean; across?: boolean }) => (
  <span className="flex h-[18px] w-full pl-[13px]">
    <span className={`border-l border-dotted border-[#8a8a8a] ${last ? "h-[9px]" : "h-[18px]"}`} />
    {across && <span className="h-[9px] flex-1 border-b border-dotted border-[#8a8a8a]" />}
  </span>
);

const ProjectTree = () => {
  const [checked, setChecked] = useState(true);

  return (
    <ul className="min-h-0 flex-1 overflow-hidden pt-[2px] font-['Roboto',sans-serif] text-[11px] text-[#10103c]">
      {NODES.map((node) => (
        <li key={node.label} className="flex h-[18px] items-center whitespace-nowrap">
          <span className="relative w-[26px] shrink-0">
            <Guide across={node.level === 0} last={node.last && node.level === 0} />
            {node.box && <Expander sign={node.box} />}
          </span>
          {node.level === 1 && (
            <span className="-ml-[2px] w-[26px] shrink-0">
              <Guide across last={node.last} />
            </span>
          )}
          {node.check && (
            <input
              type="checkbox"
              aria-label="Operace"
              checked={checked}
              onChange={() => setChecked(!checked)}
              className="mr-1 size-[11px] shrink-0 appearance-none border border-[#777] bg-white text-[10px] font-bold leading-[9px] text-black before:block checked:before:content-['✓']"
            />
          )}
          <span className={`flex shrink-0 items-center justify-center ${node.level ? "w-[18px]" : "w-5"}`}>
            {node.icon}
          </span>
          {node.label && <span className={node.level ? "pl-[5px]" : "pl-1"}>{node.label}</span>}
        </li>
      ))}
      <li className="relative ml-[23px] h-[18px] w-[27px]">
        <Guide across last />
        <Expander sign="-" />
      </li>
    </ul>
  );
};

const PANEL_TABS: ReactNode[] = [
  <Svg>
    <path d="M0 3l4-1 5 4v8l-5-4z" fill="#f6cf3a" stroke="#222" />
    <path d="M5 4l5-3 5.500 2v6L9 14V8z" fill="#12b012" stroke="#0a3a0a" />
    <path d="M9 5l3-1v3l-3 1z" fill="#f6cf3a" stroke="#222" />
  </Svg>,
  <Svg>
    <path d="M1 4h11v11H1z" fill="#f6f6f6" stroke="#666" />
    <path d="M3 8h2M3 11h2M7 8h4M7 11h4" stroke="#3c5cc0" />
    <path d="M5 3l5-2 6 2-4 3-2-1-4 1z" fill="#f1c48a" stroke="#8c5a1c" />
  </Svg>,
  <Svg>
    <path d="M2 0v15M2 3h6M2 11h7" stroke="#111" />
    <rect x="7" y="1" width="5" height="5" fill="#fbdc2a" stroke="#111" />
    <rect x="9" y="9" width="5" height="5" fill="#fbdc2a" stroke="#111" />
  </Svg>,
  <Svg>
    <circle cx="8" cy="8" r="7" fill="#e02020" />
    <path d="M8 1a7 7 0 0 1 7 7H8z" fill="#1c3cc8" />
    <path d="M1 8h14a7 7 0 0 1-14 0z" fill="#f6c820" />
    <path d="M8 8h7a7 7 0 0 1-4 6z" fill="#d82020" />
    <circle cx="6" cy="5" r="2" fill="#fff" opacity=".6" />
  </Svg>,
  <ToolDisc />,
];

const LeftPanel = () => (
  <div className="flex w-[202px] shrink-0 flex-col bg-white">
    <div className="flex h-[29px] shrink-0 items-end border-t border-[#5b607a] bg-[#ced3e4]">
      {PANEL_TABS.map((icon, i) => (
        <button
          key={i}
          aria-label={`Panel ${i + 1}`}
          className={`flex w-7 items-center justify-center rounded-t border border-b-0 border-[#7c8199] ${
            i === 4 ? "h-6 bg-white" : "h-[23px] bg-[#b9bed3]"
          }`}
        >
          {icon}
        </button>
      ))}
    </div>
    <ProjectTree />
    <div className="flex h-[18px] shrink-0 items-center bg-[#f0f0f0] px-[6px]">
      <svg width="4" height="7" viewBox="0 0 4 7">
        <path d="M4 0v7L0 3.500z" fill="#333" />
      </svg>
      <span className="ml-2 flex h-[15px] w-[150px] items-center justify-center gap-[2px] border border-[#999] bg-linear-to-b from-[#f6f6f6] to-[#d2d2d2]">
        <span className="h-[6px] w-px bg-[#555]" />
        <span className="h-[6px] w-px bg-[#555]" />
        <span className="h-[6px] w-px bg-[#555]" />
      </span>
      <svg className="ml-auto" width="4" height="7" viewBox="0 0 4 7">
        <path d="M0 0v7l4-3.500z" fill="#333" />
      </svg>
    </div>
    <div className="h-[2px] shrink-0 border-b border-[#5b607a] bg-[#ced3e4]" />
  </div>
);

/* ---------- simulator menu and toolbars ---------- */

const MENU = ["Soubor", "Zobrazení", "Stroj", "Ovládání", "Nastavení", "Nápověda"];

const SimulatorToolbars = () => {
  const [speed, setSpeed] = useState(68);

  return (
    <div className="shrink-0 pt-[10px]">
      <div className="flex h-8 items-center">
        <Grip first />
        <div className="ml-2 flex gap-[15px] text-[11px] text-black">
          {MENU.map((item) => (
            <button key={item}>
              <span className="underline">{item[0]}</span>
              {item.slice(1)}
            </button>
          ))}
        </div>
      </div>
      <div className="flex h-[34px] items-center">
        <Grip first />
        <Tool label="Na začátek" icon={<Media d={P.first} />} />
        <Tool label="Krok zpět" icon={<Media d={P.prev} />} />
        <Tool label="Spustit" icon={<Media d={P.play} />} />
        <Tool label="Krok vpřed" icon={<Media d={P.next} />} />
        <Tool label="Na konec" icon={<Media d={P.last} />} />
        <Tool label="Zastavit" icon={<Media d={P.stop} />} />
        <Sep />
        <Tool label="Rychle" icon={<Media d={P.ff} />} />
        <Tool label="Opakovat" icon={<LoopGray />} />
        <Tool label="Obnovit" icon={<LoopBlue />} />
        <Sep />
        <div className="flex w-[138px] flex-col items-center px-[9px]">
          <span className="h-[5px] w-[113px] bg-[repeating-linear-gradient(to_right,#222_0_1px,transparent_1px_7px)]" />
          <input
            type="range"
            aria-label="Rychlost simulace"
            value={speed}
            onChange={(e) => setSpeed(Number(e.target.value))}
            className="h-[21px] w-full appearance-none bg-[linear-gradient(#a8a8a8,#a8a8a8)] bg-[length:100%_2px] bg-center bg-no-repeat [&::-webkit-slider-thumb]:h-4 [&::-webkit-slider-thumb]:w-[10px] [&::-webkit-slider-thumb]:appearance-none [&::-webkit-slider-thumb]:rounded-t-[5px] [&::-webkit-slider-thumb]:rounded-b-[2px] [&::-webkit-slider-thumb]:border [&::-webkit-slider-thumb]:border-[#777] [&::-webkit-slider-thumb]:bg-[#ececec]"
          />
        </div>
        <Sep />
        <Tool label="Čas" icon={<Clock />} />
        <Tool label="NC" active icon={<NcBadge />} />
        <More />
        <Grip />
        <Tool label="Rovina" icon={<PlaneSheet />} />
        <Tool label="Klávesnice" icon={<Keyboard />} />
        <Tool label="Možnosti" icon={<GearWrench />} />
        <More />
        <Grip />
        <Tool label="Dráha" icon={<BlueHook />} />
        <Tool label="Obrábění" active icon={<CutBadge />} />
        <Tool label="Stroj" icon={<GreenBadge />} />
        <More />
        <Grip />
        <Tool label="Zaměřit nástroj" icon={<FocusIn core="tool" />} />
        <Tool label="Zaměřit díl" icon={<FocusIn core="part" />} />
        <Tool label="Zaměřit stroj" active icon={<FocusIn core="machine" />} />
        <More />
        <Grip />
        <Tool label="Připnout" icon={<Pin />} />
        <Tool label="Značka" icon={<Flag />} />
        <More />
      </div>
      <div className="flex h-[34px] items-center">
        <Grip first />
        <Tool label="Přizpůsobit" icon={<FitView />} />
        <Sep />
        <Tool label="Izometrie" icon={<ViewCube top="#f9806c" left="#f2452f" right="#dd2a18" />} />
        <Tool label="Shora" icon={<ViewCube top="#f2665a" left="#f2f9ff" />} />
        <Tool label="Zleva" icon={<ViewCube top="#a9d6f7" left="#ee5a48" />} />
        <Tool label="Zprava" icon={<ViewCube left="#f2f9ff" right="#ee4030" />} />
        <Tool label="Zdola" icon={<ViewCube top="#a9d6f7" left="#f2f9ff" edge="M2 18l10 5 10-5" />} />
        <Tool label="Zezadu" icon={<ViewCube top="#a9d6f7" left="#f2f9ff" edge="M2 6l10-5" />} />
        <Tool label="Zepředu" icon={<ViewCube top="#a9d6f7" left="#c8e6fb" edge="M12 1l10 5" />} />
        <More />
        <Grip />
        <Tool label="Sledovat dráhu" icon={<EyeTool path />} />
        <Tool label="Sledovat nástroj" active arrow icon={<EyeToolLow />} />
        <Tool label="Sledovat polotovar" icon={<EyeGray />} />
        <span className="flex w-[14px] justify-center">
          <Arrow gray />
        </span>
        <Tool label="Sledovat díl" active arrow icon={<EyePart />} />
        <Tool label="Přípravek" icon={<BoxGray />} />
        <span className="flex w-[34px] justify-end">
          <Tool label="Zobrazit stroj" icon={<MachineGray />} />
        </span>
        <span className="flex w-2 justify-center">
          <Arrow gray />
        </span>
        <More />
        <Grip />
        <Tool label="Plocha s bodem" icon={<Bulb dot />} />
        <Tool label="Plocha" icon={<Bulb />} />
        <Sep />
        <Tool label="Segmenty" icon={<PathIcon d={PATHS.a} />} />
        <Tool label="Křivka" icon={<PathIcon d={PATHS.b} />} />
        <Sep />
        <Tool label="Dráha k nástroji" icon={<PathIcon d={PATHS.c} tool={17} />} />
        <Tool label="Dráha od nástroje" icon={<PathIcon d={PATHS.d} tool={2} />} />
        <Tool label="Úsek dráhy" icon={<PathIcon d={PATHS.e} tool={14} />} />
        <Sep />
        <Tool label="Osy nástroje" icon={<PathIcon d={PATHS.f} tool={10} />} />
        <Tool label="Body dráhy" icon={<PathIcon d={PATHS.b} />} />
        <Tool label="Skrytá dráha" icon={<PathIcon d={PATHS.b} light />} />
        <Tool label="Uzavřená dráha" icon={<PathIcon d={PATHS.g} />} />
        <More />
      </div>
    </div>
  );
};

/* ---------- docked panels ---------- */

const PinGlyph = () => (
  <svg width="9" height="9" viewBox="0 0 9 9" fill="none">
    <path d="M2.500 5.500v-5h4v5M1 5.500h7M4.500 5.500V9M5.500.5v5" stroke="#000" />
  </svg>
);

const DockTitle = ({ title, closable = true }: { title: string; closable?: boolean }) => (
  <div className="flex h-[17px] shrink-0 items-center border border-[#a0a0a0] pl-[3px] pr-1 text-[11px] text-black">
    {title}
    <button aria-label="Připnout panel" className="ml-auto">
      <PinGlyph />
    </button>
    <button aria-label="Zavřít panel" className={`ml-2 ${closable ? "" : "invisible"}`}>
      <svg width="9" height="9" viewBox="0 0 9 9">
        <path d="M1 1l7 7M8 1L1 8" stroke="#000" strokeWidth="1.500" />
      </svg>
    </button>
  </div>
);

const CutSimIcon = () => (
  <Svg>
    <path d="M1 8l7 4 7-4v4l-7 4-7-4z" fill="#f2f9ff" stroke="#4a90d8" />
    <circle cx="8" cy="5" r="4.500" fill="#f7a53a" stroke="#b8660c" />
  </Svg>
);

const MACHINE_TABS = [
  { label: "Seznam pohybů", color: "bg-[#ef9c9c]", icon: <NcBadge size={16} gold={false} /> },
  {
    label: "Analýza",
    color: "bg-[#bccb9c]",
    icon: (
      <Svg>
        <path d="M12 2L2 8l3 4 9 1" stroke="#4c5878" strokeWidth="2" />
      </Svg>
    ),
  },
  { label: "Statistika", color: "bg-[#ef9c9c]", icon: <Info size={16} /> },
  { label: "Stroj", color: "bg-[#fcd772]", icon: <MachineCube size={16} /> },
];

const AXIS_TABS = [
  {
    label: "Zpráva",
    color: "bg-[#a5c0d8]",
    icon: (
      <Svg>
        <rect x="2" y="1" width="12" height="14" fill="#fff" stroke="#1c62ad" strokeWidth="1.500" />
        <path d="M4 4h2M4 8h2M4 12h2" stroke="#e02020" strokeWidth="1.500" />
        <path d="M8 4h4M8 8h4M8 12h4" stroke="#1c62ad" />
      </Svg>
    ),
  },
  { label: "CutSim", color: "bg-[#fcd772]", icon: <CutSimIcon /> },
  {
    label: "Analysis",
    color: "bg-[#bccb9c]",
    icon: (
      <Svg>
        <circle cx="8" cy="4" r="3.500" fill="#e01818" stroke="#700" />
        <circle cx="4" cy="11" r="3.500" fill="#18a818" stroke="#050" />
        <circle cx="12" cy="11" r="3.500" fill="#2468d8" stroke="#003" />
      </Svg>
    ),
  },
  {
    label: "Measure",
    color: "bg-[#ef9c9c]",
    icon: (
      <Svg>
        <path d="M4 1v12l3-3 2 5 2-1-2-5h4z" fill="#fff" stroke="#555" />
      </Svg>
    ),
  },
  {
    label: "Ovládání os",
    color: "bg-[#d9a9c0]",
    icon: (
      <Svg>
        <path d="M2 14L14 2M9 2h5v5" stroke="#343c84" strokeWidth="2" />
        <path d="M12 5C5 1 1 4 3 9s9 6 10 1" stroke="#c01830" strokeWidth="2" />
      </Svg>
    ),
  },
];

type DockTabsProps = { tabs: typeof MACHINE_TABS; className: string };

const DockTabs = ({ tabs, className }: DockTabsProps) => (
  <div className={`flex shrink-0 overflow-hidden border-t border-black bg-[#f7f7f7] pl-[2px] text-[11px] text-black ${className}`}>
    {tabs.map(({ label, color, icon }) => (
      <button
        key={label}
        className={`flex h-[21px] items-center gap-[2px] whitespace-nowrap rounded-b-[3px] border-b border-r-2 border-[#6e6e6e] pl-[3px] pr-[6px] pt-[3px] ${color}`}
      >
        {icon}
        {label}
      </button>
    ))}
  </div>
);

const MachinePanel = () => (
  <>
    <DockTitle title="Stroj" closable={false} />
    <div className="mt-1 flex min-h-0 flex-1 flex-col border border-b-0 border-[#a0a0a0]">
      <div className="flex min-h-0 flex-1 flex-col border-2 border-[#fcd772]">
        <div className="flex h-[30px] shrink-0 items-center bg-[#f0f0f0] pl-1">
          <Tool
            label="Nový stroj"
            icon={
              <MachineBlue extra={<path d="M12 1h8l4 4v12H12zM20 1v4h4" fill="#fff" stroke="#2f6fb8" />} />
            }
          />
          <Tool label="Otevřít stroj" icon={<Folder />} />
          <Tool
            label="Uložit stroj"
            icon={
              <MachineBlue
                extra={
                  <g>
                    <path d="M11 1h14v12H11z" fill="#2c5fb4" />
                    <path d="M13 2h10v6H13z" fill="#fff" />
                    <path d="M13 1.500h10" stroke="#e03030" />
                    <path d="M14 4.500h8" stroke="#a0a8b8" />
                  </g>
                }
              />
            }
          />
          <Tool
            label="Uložit stroj jako"
            icon={
              <MachineBlue
                extra={
                  <g>
                    <path d="M11 1h14v12H11z" fill="#2c5fb4" />
                    <path d="M13 2h10v6H13z" fill="#fff" />
                    <path d="M13 1.500h10" stroke="#e03030" />
                    <path d="M14 5.500h9" stroke="#111" strokeWidth="2" strokeDasharray="2 1.500" />
                  </g>
                }
              />
            }
          />
          <Tool
            label="Upravit stroj"
            icon={<MachineBlue gray extra={<path d="M13 13l1-4 8-8 3 3-8 8z" fill="#b0b0b0" stroke="#888" />} />}
          />
          <Tool label="Informace" icon={<Info />} />
        </div>
        <div className="flex min-h-0 flex-1 items-start border-b border-[#a0a0a0] bg-white pl-3 text-[12px] text-black">
          <div className="flex h-5 items-center">
            <span className="w-[11px] border-b border-dotted border-[#8a8a8a]" />
            <MachineCube />
            <span className="pl-1">Nepojmenovaný</span>
          </div>
        </div>
        <div className="mt-[3px] grid h-[82px] shrink-0 grid-cols-2 border border-[#b0b0b0] bg-white">
          <div className="border-r border-[#dcdcdc]" />
        </div>
      </div>
    </div>
    <DockTabs tabs={MACHINE_TABS} className="h-[22px]" />
  </>
);

const AxisPanel = () => (
  <>
    <div className="mt-2 flex shrink-0 flex-col">
      <DockTitle title="Ovládání os" />
    </div>
    <div className="mt-[2px] flex min-h-0 flex-1 flex-col border border-b-0 border-[#a0a0a0]">
      <div className="flex-1 border-2 border-[#d9a9c0] bg-[#f0f0f0]" />
    </div>
    <DockTabs tabs={AXIS_TABS} className="h-[17px]" />
  </>
);

/* ---------- viewport ---------- */

const Viewport = () => (
  <div className="relative min-h-0 flex-1 bg-[linear-gradient(to_bottom,#000,#fff)]">
    <svg className="absolute bottom-[34px] left-[60px]" width="70" height="100" viewBox="0 0 70 100">
      <path d="M13 63L15 35" stroke="#0000b0" strokeWidth="5" />
      <path d="M10 33l6-13 7 13c-4 3-9 3-13 0z" fill="#000050" />
      <path d="M13 63l28-16" stroke="#10d010" strokeWidth="4" />
      <path d="M36 40l19-2-12 13z" fill="#18b818" />
      <path d="M13 63l28 19" stroke="#f01010" strokeWidth="5" />
      <path d="M46 76l9 15-20-3z" fill="#c01010" />
      <circle cx="13" cy="63" r="4" fill="#000" />
      <text x="6" y="13" fontSize="14" fontFamily="Liberation Sans" fill="#1010e0">Z</text>
      <text x="53" y="31" fontSize="14" fontFamily="Liberation Sans" fill="#10e010">Y</text>
      <text x="54" y="96" fontSize="14" fontFamily="Liberation Sans" fill="#f01010">X</text>
    </svg>
    <div className="absolute bottom-[30px] right-[10px] flex h-[14px] w-[170px] items-center justify-between bg-black px-[3px] font-['Liberation_Sans',sans-serif] text-[13px] font-bold leading-[14px] text-white">
      <span className="flex h-[10px] w-10 items-center border-l border-[#999]">
        <span className="h-px flex-1 bg-[#999]" />
      </span>
      44 mm
      <span className="flex h-[10px] w-10 items-center border-r border-[#999]">
        <span className="h-px flex-1 bg-[#999]" />
      </span>
    </div>
  </div>
);

const Progress = () => (
  <>
    <div className="mt-1 flex shrink-0 flex-col pl-px">
      <DockTitle title="Postup" />
    </div>
    <div className="flex h-8 shrink-0 items-center px-[9px] pt-3">
      <input
        type="range"
        aria-label="Postup"
        defaultValue={0}
        className="h-[17px] w-full appearance-none bg-[linear-gradient(#c4c4c4,#c4c4c4)] bg-[length:100%_2px] bg-center bg-no-repeat [&::-webkit-slider-thumb]:h-4 [&::-webkit-slider-thumb]:w-[10px] [&::-webkit-slider-thumb]:appearance-none [&::-webkit-slider-thumb]:rounded-t-[5px] [&::-webkit-slider-thumb]:rounded-b-[2px] [&::-webkit-slider-thumb]:border [&::-webkit-slider-thumb]:border-[#aaa] [&::-webkit-slider-thumb]:bg-[#f4f4f4]"
      />
    </div>
  </>
);

/* ---------- simulation dialog ---------- */

const DIALOG_ROWS = [
  [
    { label: "Zbytkový materiál", width: "w-[122px]" },
    { label: "Solid Verify", width: "flex-1" },
  ],
  [{ label: "Rapid simulace", width: "flex-1" }],
  [
    { label: "CAD", width: "w-[71px]" },
    { label: "2D", width: "w-[71px]" },
    { label: "3D", width: "flex-1" },
  ],
  [
    { label: "Simulace stroje", width: "w-[113px]" },
    { label: "Solid Verify II", width: "flex-1" },
  ],
];

const DIALOG_BUTTONS = [
  { label: "Po krocích", d: "M0 1v10M3 1v10M6 1v10l11-5z" },
  { label: "Přehrát", d: "M2 1v10l11-5z" },
  { label: "Pauza", d: "M5 3h1v6H5zM9 3h1v6H9z" },
  { label: "Další operace", d: "M2 1v10l9-5zM14 1v10" },
  { label: "Do konce", d: "M1 1v10l10-5zM13 1v10M16 1v10" },
];

const SimulationDialog = () => (
  <div className="absolute left-[78px] top-[297px] flex h-[359px] w-[245px] flex-col rounded-[7px] border border-[#4c5058] bg-[linear-gradient(to_right,#fdfdfd_0_62%,#b5d5f0_65%,transparent_69%),linear-gradient(to_bottom,#59616b,#66707c_120px,#8fa0b8_200px,#c5dcf5)] pb-[6px] pl-[7px] pr-[5px] font-['Liberation_Sans',sans-serif] text-[11px] text-black shadow-[0_1px_8px_rgba(0,0,0,0.6),inset_0_0_0_1px_rgba(255,255,255,0.6)]">
    <div className="flex h-[29px] shrink-0 items-start">
      <span className="mt-[6px]">
        <ToolDisc />
      </span>
      <span className="mt-[5px] bg-[radial-gradient(closest-side,#b4dcfa,transparent)] px-[5px] font-['Open_Sans',sans-serif] leading-[18px]">
        Simulace
      </span>
      <span className="ml-auto flex h-[19px] overflow-hidden rounded-b border border-t-0 border-[#b4bac2] text-white">
        <button aria-label="Nápověda" className="w-[28px] border-r border-[#b4bac2] text-[13px] font-bold leading-[18px]">
          ?
        </button>
        <button aria-label="Zavřít" className="flex w-[46px] items-center justify-center">
          <svg width="9" height="8" viewBox="0 0 10 9">
            <path d="M1 0l8 9M9 0L1 9" stroke="#fff" strokeWidth="2.500" />
          </svg>
        </button>
      </span>
    </div>
    <div className="flex min-h-0 flex-1 flex-col border border-[#5a6068] bg-[#f0f0f0] px-[7px] pb-1 pt-2">
      {DIALOG_ROWS.map((row, i) => (
        <div key={i} className="flex h-[18px] shrink-0">
          {row.map(({ label, width }) => (
            <button
              key={label}
              className={`whitespace-nowrap border-l border-r-2 border-t border-l-white border-r-[#8a8a8a] border-t-white pl-1 ${width}`}
            >
              {label}
            </button>
          ))}
        </div>
      ))}
      <div className="-mr-[2px] flex flex-1 flex-col justify-end border-b-2 border-r-2 border-[#8a8a8a] bg-white pb-3 pl-[11px] pr-[9px]">
        <div className="flex h-12 items-start justify-between border-t border-[#8a8a8a] bg-[#f0f0f0] pl-3 pr-[14px] pt-[11px] text-[#9c9c9c]">
          {DIALOG_BUTTONS.map(({ label, d }) => (
            <button key={label} aria-label={label}>
              <svg width="17" height="12" viewBox="0 0 17 12" fill="currentColor" stroke="currentColor" strokeWidth="1">
                <path d={d} />
              </svg>
            </button>
          ))}
          <button aria-label="Vysunout" className="text-black">
            <svg width="12" height="13" viewBox="0 0 12 13" fill="currentColor">
              <path d="M6 0l6 9H0zM0 10h12v2H0z" />
            </svg>
          </button>
        </div>
      </div>
    </div>
  </div>
);

/* ---------- task pane tabs on the right edge ---------- */

const TASKS: ReactNode[] = [
  <Svg>
    <path d="M1 8l7-7 7 7M3 7v8h10V7" fill="#fbe07a" stroke="#a86a10" strokeWidth="1.500" />
    <path d="M7 10h3v5H7z" fill="#fff" stroke="#a86a10" />
  </Svg>,
  <Svg>
    <path d="M1 6l3-2v10l-3-1z" fill="#f6cf3a" stroke="#111" />
    <path d="M5 4l4 2v9l-4-2z" fill="#12a812" stroke="#111" />
    <path d="M10 3l4-1v11l-4 2z" fill="#4a8cf0" stroke="#111" />
  </Svg>,
  <Svg>
    <path d="M1 3h5l1 2h7v9H1z" fill="#f3c44a" stroke="#9c7400" />
    <path d="M4 8h12l-3 6H1z" fill="#fdf0b0" stroke="#9c7400" />
  </Svg>,
  <Svg>
    <path d="M1 1h7v4H1zM10 1h6v4h-6zM1 6h7v4H1zM10 6h6v4h-6z" fill="#fbdc4a" stroke="#5a5a9c" />
    <path d="M2 13.500h6M6 11l3 2.500L6 16" stroke="#1414d8" strokeWidth="1.500" />
  </Svg>,
  <Svg>
    <circle cx="8" cy="8" r="7" fill="#f6c820" />
    <path d="M8 1a7 7 0 0 0-7 7h7z" fill="#2c7be8" />
    <path d="M8 1a7 7 0 0 1 7 7H8z" fill="#e02020" />
    <path d="M8 8h7a7 7 0 0 1-7 7z" fill="#18a818" />
  </Svg>,
  <Svg>
    <path d="M2 5h11v10H2zM4 9h7M4 12h7" fill="#f6f6f6" stroke="#777" />
    <path d="M4 4l5-3 7 2-4 3-2-1-5 1z" fill="#f1c48a" stroke="#8c5a1c" />
  </Svg>,
];

const TaskTabs = () => (
  <div className="absolute right-0 top-[134px] w-[21px]">
    {TASKS.map((icon, i) => (
      <button
        key={i}
        aria-label={`Podokno ${i + 1}`}
        className={`flex h-6 w-full items-center justify-end rounded-l border border-r-0 border-[#6f7590] pr-px ${
          i === 0 ? "bg-[#f4f5fa]" : "bg-[#b9bed3]"
        }`}
      >
        {icon}
      </button>
    ))}
  </div>
);

const PointerArrow = () => (
  <svg
    className="pointer-events-none absolute right-[132px] top-[112px] drop-shadow-[3px_4px_2px_rgba(0,0,0,0.35)]"
    width="146"
    height="130"
    viewBox="0 0 146 130"
  >
    <path d="M137 7l3 3L18 116l-4-5z" fill="#fa0a0a" />
    <path d="M5 123l7-18 4 1-1 7 3 3 5 1v4z" fill="#fa0a0a" />
  </svg>
);

/* ---------- bottom bars ---------- */

const SheetTabs = () => (
  <div className="flex h-[17px] shrink-0 items-stretch bg-[#e1e3ec] font-['Liberation_Sans',sans-serif] text-[12px] text-[#1a1a1a]">
    <div className="flex w-[69px] shrink-0 items-center gap-[2px] bg-[#a4a8be] pl-[3px]">
      {["M2 1v7M8 1v7L3 4.500z", "M7 1v7L3 4.500z", "M3 1v7l4-3.500z", "M2 1v7l5-3.500zM8 1v7"].map((d) => (
        <button key={d} aria-label="Posun listů" className="flex h-[14px] w-[14px] items-center justify-center border border-[#8b8fa6]">
          <svg width="10" height="9" viewBox="0 0 10 9" fill="#7f839a" stroke="#7f839a">
            <path d={d} />
          </svg>
        </button>
      ))}
    </div>
    <button className="w-[55px] shrink-0 border-b-2 border-r-2 border-[#5b607a] bg-[#dfe2ee] font-bold leading-[15px]">
      Model
    </button>
    <button className="w-[102px] shrink-0 whitespace-nowrap border-b-2 border-r-2 border-t border-[#5b607a] bg-[#b9bccf] pr-1 leading-[14px]">
      Motion Study 1
    </button>
  </div>
);

const StatusBar = () => (
  <div className="flex h-[18px] shrink-0 items-center border-t border-[#5b607a] bg-linear-to-b from-[#cfd3e4] to-[#b3b7cc] pl-[2px] text-[11px] text-black">
    <span>SolidWorks Premium 2011 x64 verze</span>
    <span className="ml-auto mr-[18px]">Plně určená</span>
    <span className="mr-[33px]">Úprava Sestava</span>
    <button
      aria-label="Nápověda"
      className="mr-[50px] flex size-[13px] items-center justify-center border border-[#3a6ea8] bg-white text-[11px] font-bold text-[#0a9c0a]"
    >
      ?
    </button>
    <span className="mr-3">
      <Svg>
        <path d="M1 9l7-7 5-1 2 4-1 3-7 7-4-1z" fill="#fbc83a" stroke="#a86a10" />
        <circle cx="12" cy="4" r="1.200" fill="#fff" stroke="#a86a10" />
        <path d="M4 9l3 3M6 7l3 3" stroke="#a86a10" />
      </Svg>
    </span>
  </div>
);

export default function App() {
  return (
    <div className="relative flex h-screen flex-col overflow-hidden bg-[#f0f0f0] font-['Open_Sans',sans-serif]">
      <Ribbon />
      <CommandTabs />
      <div className="flex min-h-0 flex-1">
        <SideToolbar />
        <div className="flex min-w-0 flex-1 flex-col">
          <div className="flex min-h-0 flex-1">
            <LeftPanel />
            <div className="w-[7px] shrink-0 border-x-2 border-l-[#7c8199] border-r-[#8c90a4] bg-[#f0f0f0]" />
            <div className="flex min-w-0 flex-1 flex-col border-b border-[#4c4f80] pl-1">
              <SimulatorToolbars />
              <div className="flex min-h-0 flex-1 gap-1 pr-[2px]">
                <div className="flex min-w-0 flex-1 flex-col">
                  <Viewport />
                  <Progress />
                </div>
                <div className="flex w-[424px] shrink-0 flex-col pt-[2px]">
                  <MachinePanel />
                  <AxisPanel />
                </div>
              </div>
            </div>
          </div>
          <div className="h-[3px] shrink-0 border-b border-black bg-[#d9dcea]" />
          <SheetTabs />
        </div>
      </div>
      <StatusBar />
      <SimulationDialog />
      <TaskTabs />
      <PointerArrow />
    </div>
  );
}
